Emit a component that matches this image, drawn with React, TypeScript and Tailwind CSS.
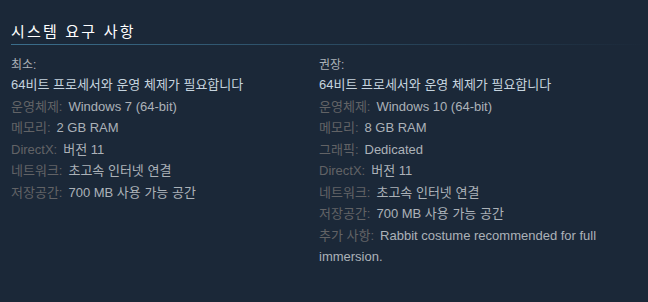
import React from "react";

type Row = { label?: string; value: string };

const minimum: Row[] = [
  { value: "64비트 프로세서와 운영 체제가 필요합니다" },
  { label: "운영체제:", value: "Windows 7 (64-bit)" },
  { label: "메모리:", value: "2 GB RAM" },
  { label: "DirectX:", value: "버전 11" },
  { label: "네트워크:", value: "초고속 인터넷 연결" },
  { label: "저장공간:", value: "700 MB 사용 가능 공간" },
];

const recommended: Row[] = [
  { value: "64비트 프로세서와 운영 체제가 필요합니다" },
  { label: "운영체제:", value: "Windows 10 (64-bit)" },
  { label: "메모리:", value: "8 GB RAM" },
  { label: "그래픽:", value: "Dedicated" },
  { label: "DirectX:", value: "버전 11" },
  { label: "네트워크:", value: "초고속 인터넷 연결" },
  { label: "저장공간:", value: "700 MB 사용 가능 공간" },
  { label: "추가 사항:", value: "Rabbit costume recommended for full immersion." },
];

function Column({ title, rows }: { title: string; rows: Row[] }) {
  return (
    <div className="w-[297px]">
      <div className="text-[12px] leading-[17px] text-[#acb2b8]">{title}</div>
      <ul className="text-[13px] leading-[21.5px] text-[#acb2b8]">
        {rows.map((r, i) => (
          <li key={i} className={r.label ? "" : "text-[#c6d4df]"}>
            {r.label && <span className="text-[#626366] mr-[6px]">{r.label}</span>}
            {r.value}
          </li>
        ))}
      </ul>
    </div>
  );
}

export default function App() {
  return (
    <div
      className="w-[648px] h-[302px] bg-[#1b2838] overflow-hidden"
      style={{ fontFamily: '"Liberation Sans", Arial, "Noto Sans CJK KR", sans-serif' }}
    >
      <div className="pl-[11px] pt-[22px]">
        <h2 className="text-[15px] leading-[19px] tracking-[2.2px] text-white pb-[4px] bg-gradient-to-r from-[#3b6e8c] to-transparent bg-no-repeat bg-bottom bg-[length:100%_1px]">
          시스템 요구 사항
        </h2>
        <div className="flex gap-[11px] pt-[12px]">
          <Column title="최소:" rows={minimum} />
          <Column title="권장:" rows={recommended} />
        </div>
      </div>
    </div>
  );
}
